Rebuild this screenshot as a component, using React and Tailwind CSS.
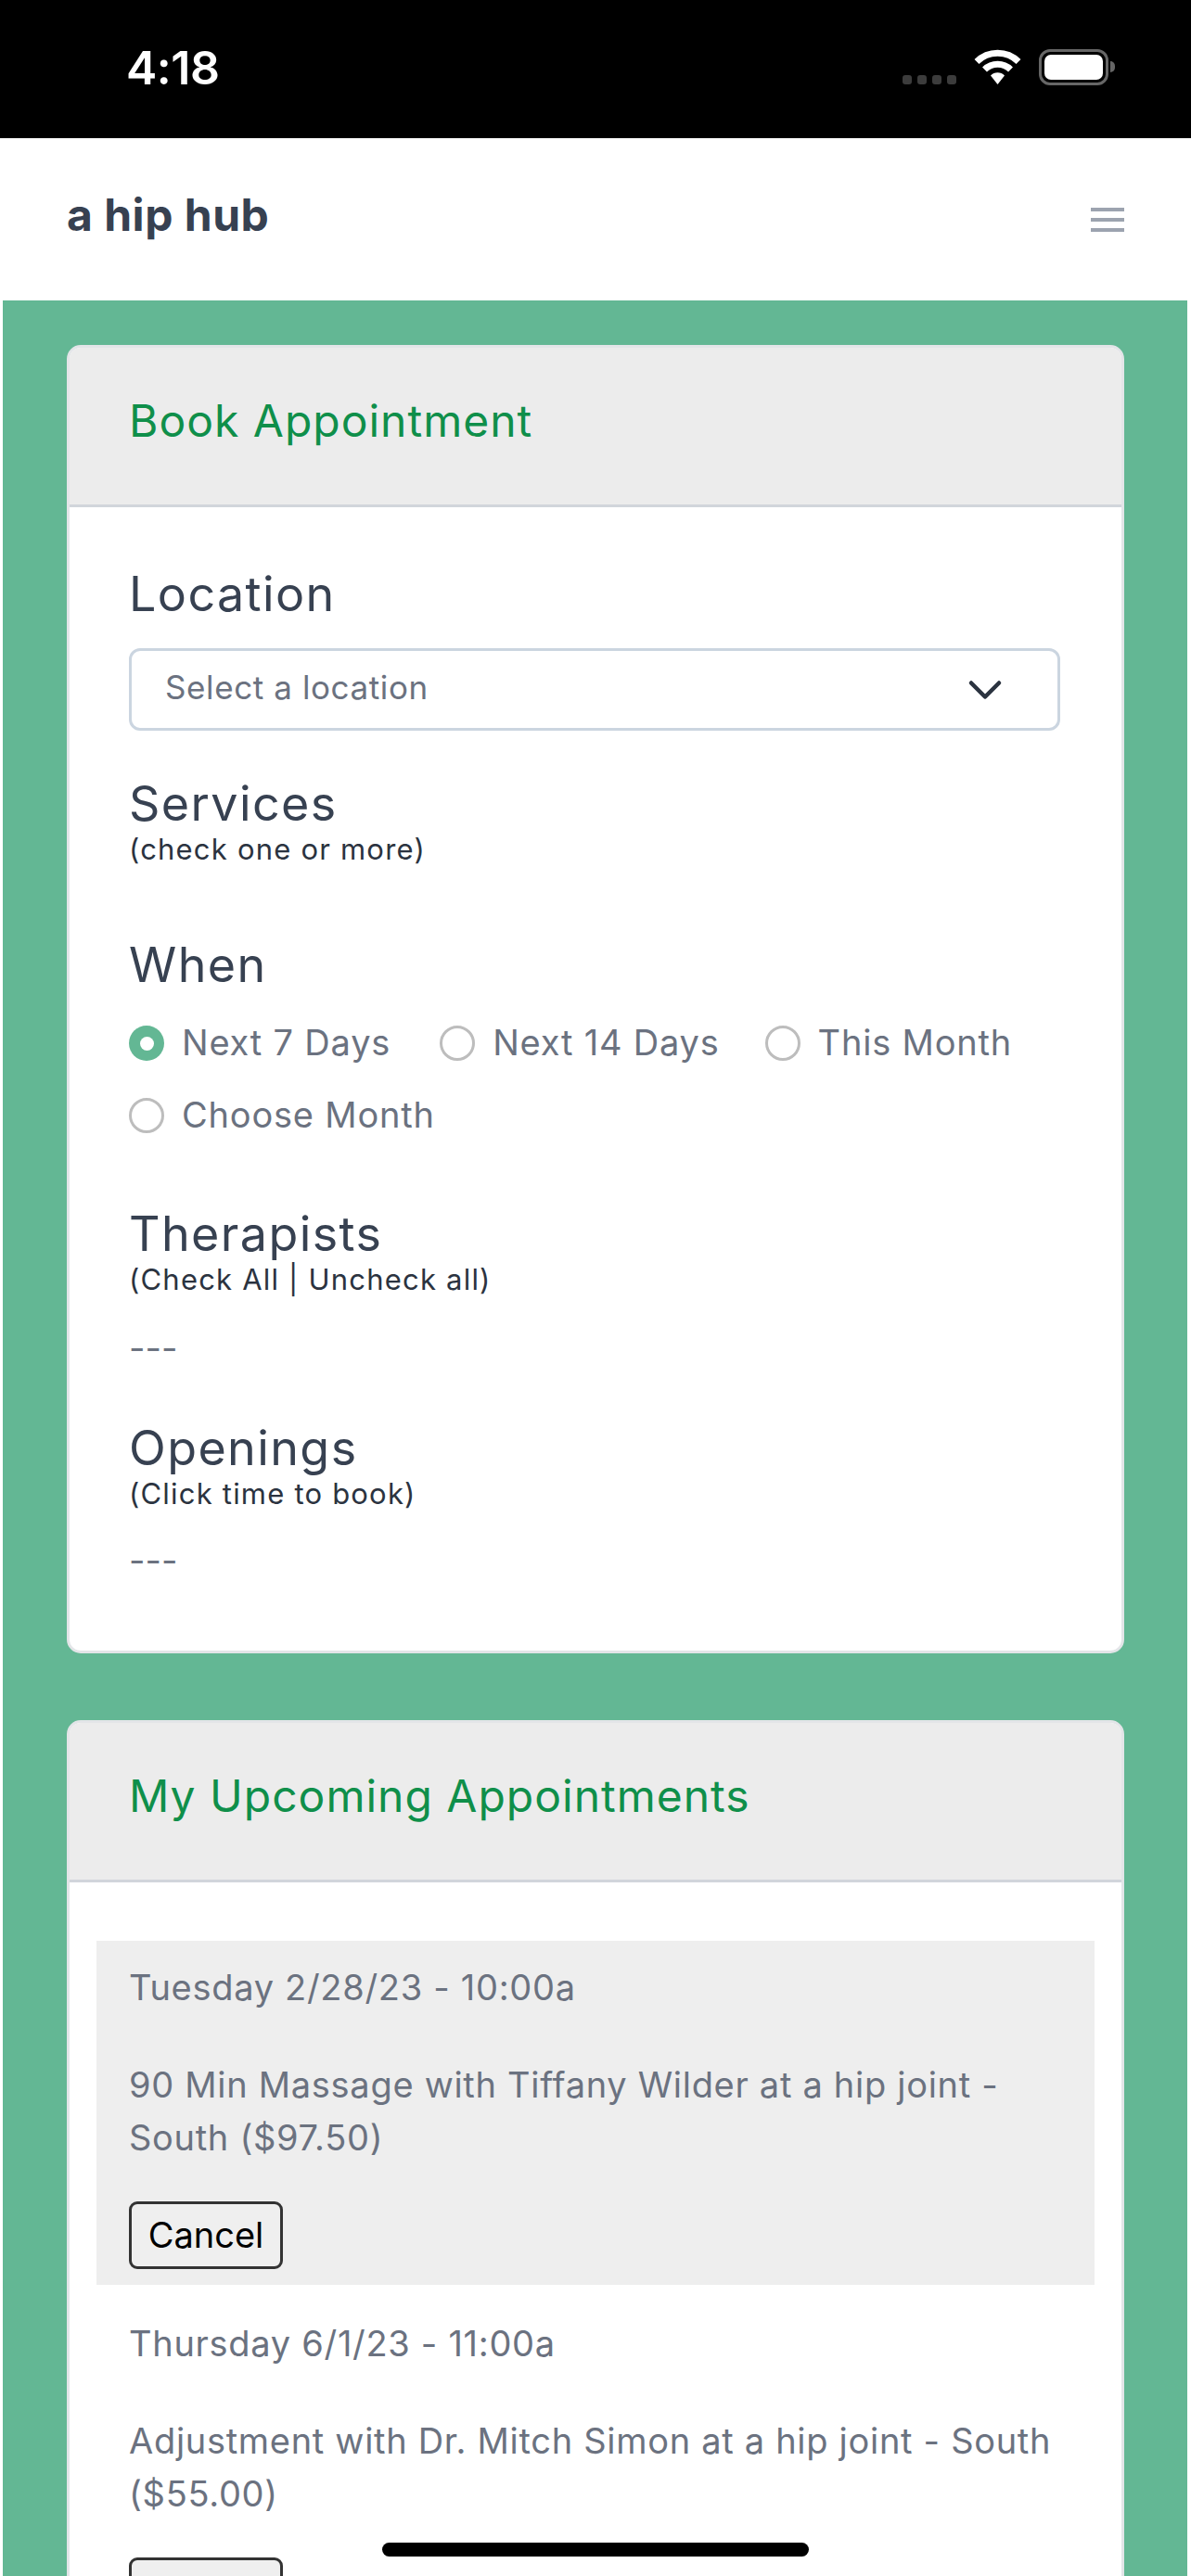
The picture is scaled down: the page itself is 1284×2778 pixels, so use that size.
import { ChevronDown } from 'lucide-react';

const font = "font-['Inter','Liberation_Sans',sans-serif]";

function StatusBar() {
  return (
    <div className="h-[149px] bg-black flex items-start justify-between pl-[136px] pr-[82px]">
      <div className="mt-[43px] text-[50px] leading-[60px] font-semibold text-white tracking-[-0.5px]">4:18</div>
      <div className="mt-[53px] flex items-start">
        <div className="mt-[28px] flex gap-[6px] mr-[19px]">
          <div className="w-[10px] h-[10px] rounded-[3px] bg-[#3c3c3c]"></div>
          <div className="w-[10px] h-[10px] rounded-[3px] bg-[#3c3c3c]"></div>
          <div className="w-[10px] h-[10px] rounded-[3px] bg-[#3c3c3c]"></div>
          <div className="w-[10px] h-[10px] rounded-[3px] bg-[#3c3c3c]"></div>
        </div>
        <svg width="51" height="38" viewBox="0 0 51 38" className="mr-[19px]">
          <path d="M3 13.5 A32 32 0 0 1 48 13.5" fill="none" stroke="#fff" strokeWidth="7" />
          <path d="M11.5 22 A20 20 0 0 1 39.5 22" fill="none" stroke="#fff" strokeWidth="7" />
          <path d="M18 28.5 A10.5 10.5 0 0 1 33 28.5 L25.5 38 Z" fill="#fff" />
        </svg>
        <div className="w-[75px] h-[39px] rounded-[12px] border-[3px] border-[#666] p-[3px]">
          <div className="w-full h-full rounded-[7px] bg-white"></div>
        </div>
        <div className="mt-[13px] ml-[2px] w-[5px] h-[12px] rounded-r-full bg-[#666]"></div>
      </div>
    </div>
  );
}

function Header() {
  return (
    <div className="h-[175px] bg-white flex items-center justify-between pl-[72px] pr-[72px]">
      <div className="text-[48px] leading-[60px] font-bold text-[#374151] tracking-[0.5px] -mt-[10px]">a hip hub</div>
      <svg width="36" height="30" viewBox="0 0 36 30">
        <rect x="0" y="2" width="36" height="4" fill="#9ca3af" />
        <rect x="0" y="13" width="36" height="4" fill="#9ca3af" />
        <rect x="0" y="24" width="36" height="4" fill="#9ca3af" />
      </svg>
    </div>
  );
}

function SectionHeading({ title, sub, className }) {
  return (
    <div className={className}>
      <div className="text-[52px] leading-[60px] text-[#374151] tracking-[1.4px]">{title}</div>
      {sub && <div className="text-[31px] leading-[38px] text-[#2b3340] tracking-[1.2px]">{sub}</div>}
    </div>
  );
}

function Radio({ label, checked }) {
  return (
    <div className="flex items-center h-[78px] mr-[49px] first:mr-[53px]">
      {checked ? (
        <span className="w-[38px] h-[38px] rounded-full bg-[#63b794] flex items-center justify-center">
          <span className="w-[15px] h-[15px] rounded-full bg-white"></span>
        </span>
      ) : (
        <span className="w-[38px] h-[38px] rounded-full border-[3px] border-[#bdbdbd] bg-white"></span>
      )}
      <span className="ml-[19px] -mt-[2px] text-[38px] text-[#6b7280] leading-[56px] tracking-[0.8px]">{label}</span>
    </div>
  );
}

function Card({ title, children, className }) {
  return (
    <div className={`bg-white border-[3px] border-[#e3e5e8] rounded-[15px] overflow-hidden ${className || ''}`}>
      <div className="h-[172px] bg-[#ececec] border-b-[3px] border-[#d1d5db] pl-[64px] pt-[49px]">
        <div className="text-[48px] leading-[60px] text-[#0f8f4a] tracking-[1px]">{title}</div>
      </div>
      {children}
    </div>
  );
}

function Appointment({ when, desc, shaded }) {
  return (
    <div className={`${shaded ? 'bg-[#eeeeee] pt-[22px] pb-[17px]' : 'pt-[35px] pb-[17px]'} pl-[35px] pr-[30px]`}>
      <div className="text-[38px] leading-[56px] text-[#6b7280] tracking-[0.7px]">{when}</div>
      <div className="mt-[49px] text-[38px] leading-[57px] text-[#6b7280] tracking-[0.7px]">{desc}</div>
      <button className="mt-[40px] block w-[166px] h-[73px] rounded-[9px] border-[3px] border-[#333] bg-[#efefef] text-[38px] text-black">Cancel</button>
    </div>
  );
}

export default function App() {
  return (
    <div className={`relative w-[1284px] h-[2778px] overflow-hidden bg-white ${font}`}>
      <StatusBar />
      <Header />
      <div className="ml-[3px] mr-[4px] h-[2454px] bg-[#63b794] pt-[48px] pl-[69px] pr-[68px]">
        <Card title="Book Appointment">
          <div className="pt-[64px] pl-[64px] pr-[65px] pb-[70px]">
            <SectionHeading title="Location" />
            <div className="mt-[28px] h-[89px] w-[1004px] rounded-[12px] border-[3px] border-[#cbd5e0] flex items-center justify-between pl-[36px] pr-[48px]">
              <span className="-mt-[5px] text-[35px] text-[#6b7280] tracking-[0.6px]">Select a location</span>
              <ChevronDown size={60} strokeWidth={1.8} className="text-[#2b3340]" />
            </div>
            <SectionHeading title="Services" sub="(check one or more)" className="mt-[49px]" />
            <SectionHeading title="When" className="mt-[76px]" />
            <div className="mt-[15px] flex flex-wrap">
              <Radio label="Next 7 Days" checked />
              <Radio label="Next 14 Days" />
              <Radio label="This Month" />
              <Radio label="Choose Month" />
            </div>
            <SectionHeading title="Therapists" sub="(Check All | Uncheck all)" className="mt-[59px]" />
            <div className="mt-[26px] text-[38px] leading-[56px] text-[#6b7280]">---</div>
            <SectionHeading title="Openings" sub="(Click time to book)" className="mt-[51px]" />
            <div className="mt-[24px] text-[38px] leading-[56px] text-[#6b7280]">---</div>
          </div>
        </Card>
        <Card title="My Upcoming Appointments" className="mt-[72px]">
          <div className="pt-[63px] px-[29px]">
            <Appointment
              shaded
              when="Tuesday 2/28/23 - 10:00a"
              desc="90 Min Massage with Tiffany Wilder at a hip joint - South ($97.50)"
            />
            <Appointment
              when="Thursday 6/1/23 - 11:00a"
              desc="Adjustment with Dr. Mitch Simon at a hip joint - South ($55.00)"
            />
          </div>
        </Card>
      </div>
      {/* home indicator */}
      <div className="absolute left-[412px] top-[2742px] w-[460px] h-[15px] rounded-full bg-black"></div>
    </div>
  );
}
